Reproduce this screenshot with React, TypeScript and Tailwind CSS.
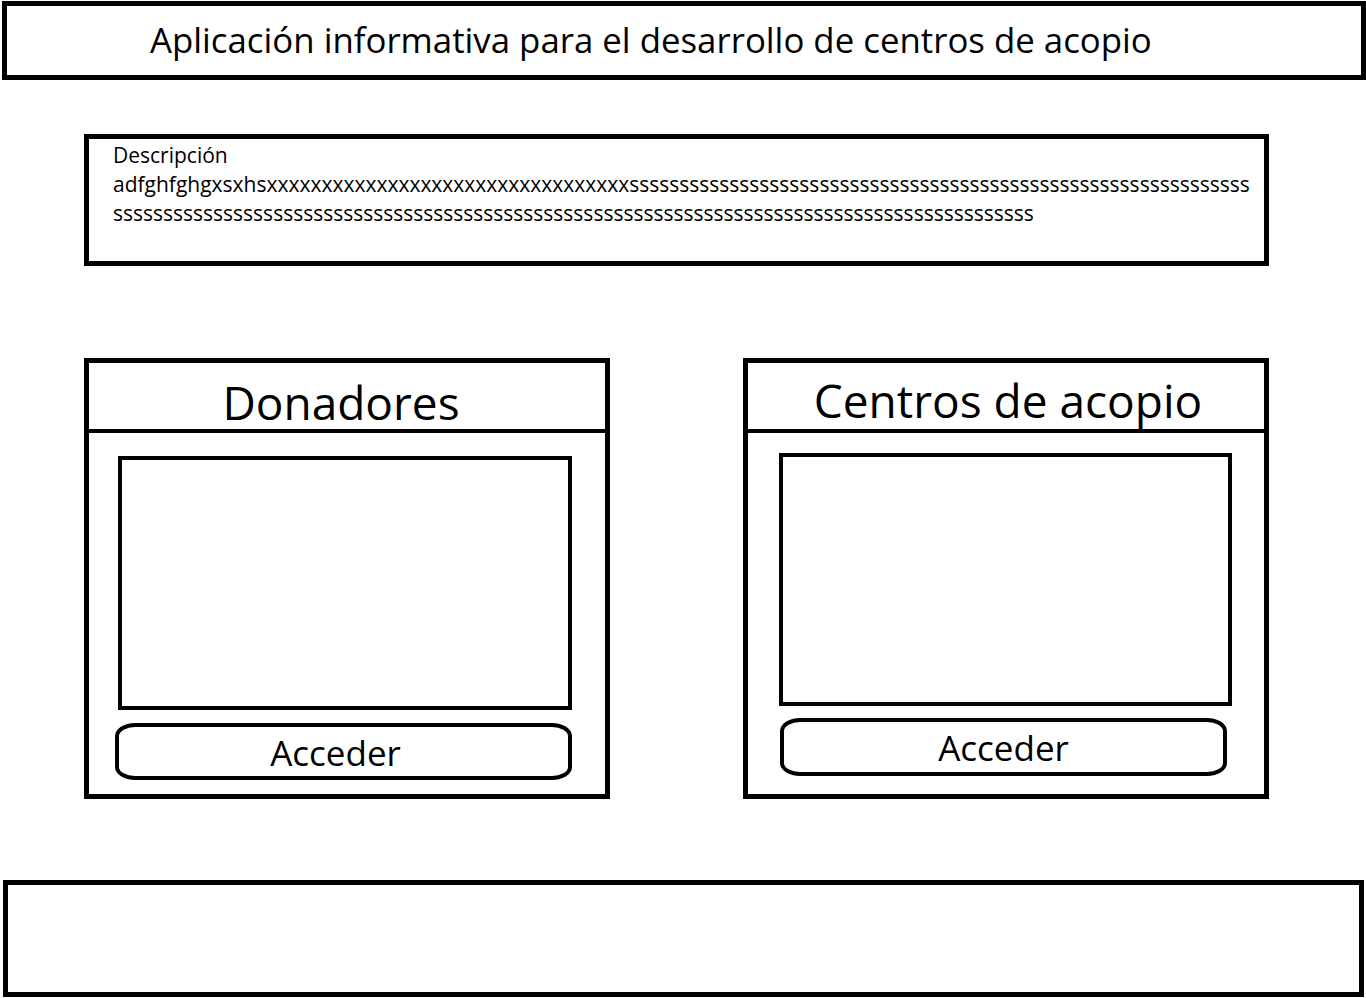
import React from 'react';

const font = { fontFamily: '"Open Sans", "Liberation Sans", sans-serif' };

const descText =
  'adfghfghgxsxhs' + 'x'.repeat(33) + 's'.repeat(154);

function Panel({ title, titleClass, boxClass, btnClass }: { title: string; titleClass: string; boxClass: string; btnClass: string }) {
  return (
    <div className="w-[526px] h-[441px] border-[5px] border-black flex flex-col">
      {/* header strip */}
      <div className={`h-[70px] border-b-[4px] border-black flex justify-center ${titleClass}`}>
        <span className="text-[46px] leading-none text-black">{title}</span>
      </div>
      {/* picture placeholder */}
      <div className={`border-[4px] border-black bg-white ${boxClass}`} />
      {/* button */}
      <button
        className={`border-[4px] border-black rounded-[20px/13px] flex items-center justify-center text-[35px] leading-none text-black ${btnClass}`}
      >
        Acceder
      </button>
    </div>
  );
}

export default function App() {
  return (
    <div className="w-[1366px] h-[998px] bg-white overflow-hidden pt-[1px]" style={font}>
      {/* title bar */}
      <header className="ml-[2px] w-[1364px] h-[79px] border-[5px] border-black flex items-center pl-[143px]">
        <h1 className="text-[34.8px] leading-none text-black">Aplicación informativa para el desarrollo de centros de acopio</h1>
      </header>

      {/* description */}
      <section className="mt-[54px] ml-[84px] w-[1185px] h-[132px] border-[5px] border-black pl-[24px] pr-[8px] pt-[2px]">
        <p className="text-[21px] leading-[29px] text-black">Descripción</p>
        <p className="text-[21px] leading-[29px] text-black break-all">{descText}</p>
      </section>

      {/* panels */}
      <div className="mt-[92px] ml-[84px] flex gap-[133px]">
        <Panel
          title="Donadores"
          titleClass="pt-[16px] pr-[12px]"
          boxClass="ml-[29px] mt-[23px] w-[454px] h-[254px]"
          btnClass="ml-[26px] mt-[13px] w-[457px] h-[57px] pt-[2px] pr-[16px]"
        />
        <Panel
          title="Centros de acopio"
          titleClass="pt-[14px] pl-[4px]"
          boxClass="ml-[31px] mt-[20px] w-[453px] h-[253px]"
          btnClass="ml-[32px] mt-[12px] w-[447px] h-[58px]"
        />
      </div>

      {/* footer */}
      <footer className="mt-[81px] ml-[3px] w-[1361px] h-[117px] border-[5px] border-black" />
    </div>
  );
}
